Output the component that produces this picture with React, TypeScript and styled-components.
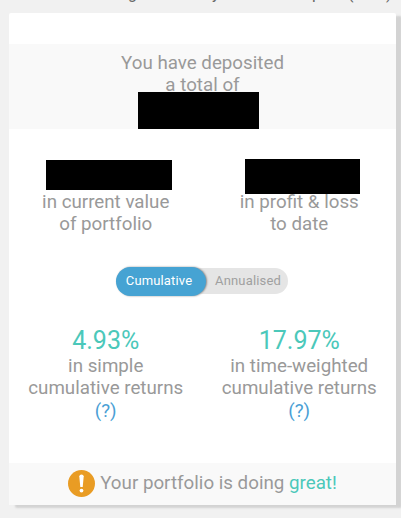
import React from 'react';
import styled, { createGlobalStyle } from 'styled-components';

const Global = createGlobalStyle`
  * { box-sizing: border-box; }
  html, body { margin: 0; background: #f1f1f1; overflow: hidden; }
  body { font-family: Roboto, "Liberation Sans", sans-serif; font-size: 18.75px; line-height: 22px; color: #999; }
`;
const Page = styled.main`
  display: flex; flex-direction: column; width: 401px; height: 518px; overflow: hidden;
`;
const Heading = styled.div`
  display: grid; grid-template-columns: 84px 100px 36px 38px 10px; height: 13px; padding-left: 128px;
  color: #666; font-size: 16px; line-height: 20px;
`;
const HeadingText = styled.span`margin-top: -16px;`;
const Card = styled.section`
  display: flex; flex-direction: column; width: 387px; height: 492px; margin-left: 9px;
  background: #fff; border-radius: 2px; box-shadow: 6px 3px 2px #d3d3d3;
`;
const Deposit = styled.header`
  display: flex; flex-direction: column; align-items: center; height: 85px; margin-top: 31px;
  padding-top: 8px; background: #f9f9f9; text-align: center;
`;
const Redacted = styled.div<{ $w: number; $h: number; $margin: string }>`
  width: ${p => p.$w}px; height: ${p => p.$h}px; margin: ${p => p.$margin};
  background: #000; flex: none;
`;
const Columns = styled.div<{ $top: number; $height: number }>`
  display: grid; grid-template-columns: 1fr 1fr; height: ${p => p.$height}px; padding-top: ${p => p.$top}px;
`;
const Metric = styled.div`
  display: flex; flex-direction: column; align-items: center; text-align: center; white-space: nowrap;
`;
const Amount = styled.div`
  display: flex; align-items: flex-end; justify-content: center; height: 34px;
`;
const Percent = styled.strong`
  color: #4bc8ba; font-size: 25px; font-weight: 400; line-height: 28px;
`;
const Description = styled.div`line-height: 22.3px;`;
const Help = styled.a`color: #4b9fd5;`;
const Toggle = styled.div`
  display: flex; align-items: center; align-self: flex-start; width: 172px; height: 26px;
  margin-left: 107px; border-radius: 13px; background: #e5e5e5; font-size: 13px; line-height: 16px;
`;
const Option = styled.button<{ $active?: boolean }>`
  display: flex; align-items: center; justify-content: center; flex: none; border: 0;
  padding: ${p => (p.$active ? '0 4px 0 0' : '0 0 0 1px')};
  width: ${p => (p.$active ? 90 : 83)}px; height: ${p => (p.$active ? 29 : 26)}px;
  border-radius: 15px; font: inherit; letter-spacing: 0.15px;
  color: ${p => (p.$active ? '#fff' : '#a0a0a0')};
  background: ${p => (p.$active ? '#46a3d3' : 'transparent')};
  box-shadow: ${p => (p.$active ? '1px 0 2px #888' : 'none')};
`;
const Status = styled.footer`
  display: flex; align-items: center; justify-content: center; height: 42px; margin-top: auto;
  padding-bottom: 2px; background: #f9f9f9; gap: 5px;
`;
const Great = styled.span`color: #4bc8ba;`;

export default function App() {
  return (
    <Page>
      <Global />
      <Heading>
        <HeadingText>g</HeadingText>
        <HeadingText>y</HeadingText>
        <HeadingText>p</HeadingText>
        <HeadingText>(</HeadingText>
        <HeadingText>)</HeadingText>
      </Heading>
      <Card>
        <Deposit>
          <div>You have deposited<br />a total of</div>
          <Redacted $w={121} $h={37} $margin="-4px 8px 0 0" />
        </Deposit>
        <Columns $top={28} $height={139}>
          <Metric>
            <Amount><Redacted $w={126} $h={30} $margin="0 0 1px 6px" /></Amount>
            <div>in current value<br />of portfolio</div>
          </Metric>
          <Metric>
            <Amount><Redacted $w={115} $h={35} $margin="0 0 -3px 6px" /></Amount>
            <div>in profit &amp; loss<br />to date</div>
          </Metric>
        </Columns>
        <Toggle><Option $active>Cumulative</Option><Option>Annualised</Option></Toggle>
        <Columns $top={33} $height={140}>
          <Metric>
            <Percent>4.93%</Percent>
            <Description>in simple<br />cumulative returns<br /><Help>(?)</Help></Description>
          </Metric>
          <Metric>
            <Percent>17.97%</Percent>
            <Description>in time-weighted<br />cumulative returns<br /><Help>(?)</Help></Description>
          </Metric>
        </Columns>
        <Status>
          <svg width="27" height="27" viewBox="0 0 27 27">
            <circle cx="13.5" cy="13.5" r="13.5" fill="#e99c24" />
            <path d="M11.3 6.2Q11.5 4.6 13.5 4.6T15.7 6.2L14.7 17H12.3Z" fill="#fff" />
            <circle cx="13.5" cy="20.6" r="1.9" fill="#fff" />
          </svg>
          <span>Your portfolio is doing <Great>great!</Great></span>
        </Status>
      </Card>
    </Page>
  );
}
